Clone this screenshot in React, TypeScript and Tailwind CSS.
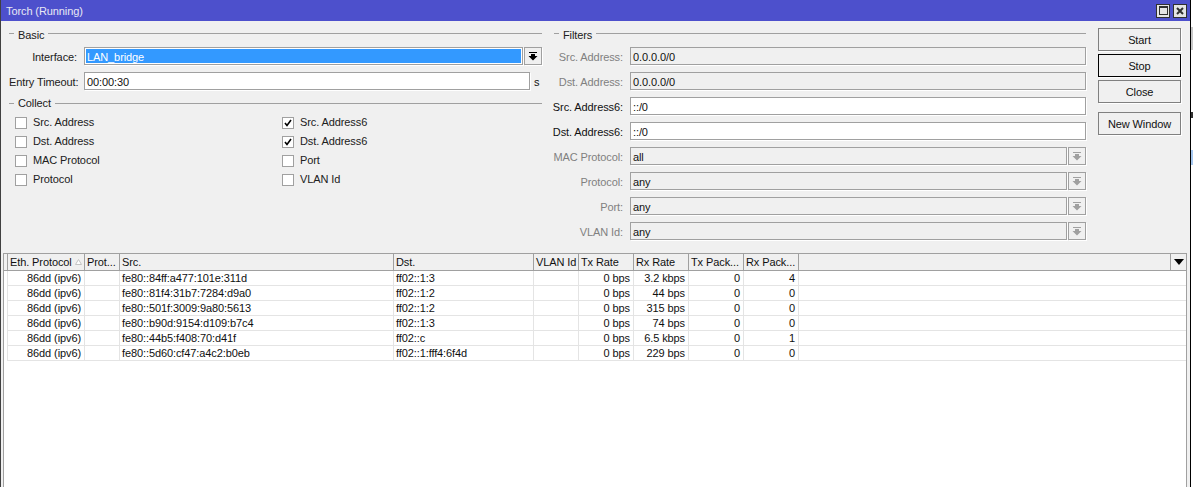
const font = "[font-family:'Liberation_Sans',Arial,sans-serif]"

function SectionTitle({ title, centered }: { title: string; centered?: boolean }) {
  return (
    <div className="flex h-[13px] items-center">
      <div className="h-px w-[5px] bg-[#a0a0a0]" />
      <span className={`px-[4px] leading-[13px] text-[#202020] ${centered ? '' : 'pt-[4px]'}`}>{title}</span>
      <div className="h-px flex-1 bg-[#a0a0a0]" />
    </div>
  )
}

function DropButton({ disabled }: { disabled?: boolean }) {
  const color = disabled ? '#a0a0a0' : '#000000'
  return (
    <div className="ml-px flex h-[18px] w-[18px] shrink-0 items-center justify-center border border-[#a0a0a0] shadow-[1px_1px_0_#ffffff]">
      <svg width="10" height="9" viewBox="0 0 10 9" fill={color}>
        <rect x="1" y="0" width="8" height="1" />
        <path d="M3 2h4v2h2.5L5 8.5.5 4H3z" />
      </svg>
    </div>
  )
}

function Field({
  label,
  value,
  disabled,
  dropdown,
  activeLabel,
}: {
  label: string
  value: string
  disabled?: boolean
  dropdown?: boolean
  activeLabel?: boolean
}) {
  return (
    <div className="flex h-[18px] items-center">
      <label className={`flex w-[69px] justify-end whitespace-nowrap pt-[2px] ${activeLabel ? 'text-[#101010]' : 'text-[#808080]'}`}>
        {label}:
      </label>
      <div
        className={`ml-[7px] flex h-[18px] flex-1 items-center border border-[#a0a0a0] px-[2px] pt-[2px] shadow-[1px_1px_0_#ffffff] ${
          disabled ? 'bg-[#f0f0f0]' : 'bg-white'
        }`}
      >
        {value}
      </div>
      {dropdown && <DropButton disabled />}
    </div>
  )
}

function Check({ label, checked }: { label: string; checked?: boolean }) {
  return (
    <div className="flex h-[13px] items-center gap-[6px]">
      <div className="flex h-[12px] w-[12px] items-center justify-center border border-[#a0a0a0] bg-white">
        {checked && (
          <svg width="8" height="8" viewBox="0 0 8 8" fill="none" stroke="#000" strokeWidth="1.6">
            <path d="M1 4l2 2.5L7 1" />
          </svg>
        )}
      </div>
      <span className="text-[#202020]">{label}</span>
    </div>
  )
}

function SideButton({ label, focused, className = '' }: { label: string; focused?: boolean; className?: string }) {
  return (
    <button
      className={`h-[23px] w-[83px] border pt-px text-center text-[#101010] shadow-[1px_1px_0_#ffffff] ${
        focused ? 'border-black' : 'border-[#808080]'
      } ${className}`}
    >
      {label}
    </button>
  )
}

const columns = [
  { title: 'Eth. Protocol', width: 'w-[77px]', sorted: true },
  { title: 'Prot...', width: 'w-[35px]' },
  { title: 'Src.', width: 'w-[274px]' },
  { title: 'Dst.', width: 'w-[140px]' },
  { title: 'VLAN Id', width: 'w-[45px]' },
  { title: 'Tx Rate', width: 'w-[55px]' },
  { title: 'Rx Rate', width: 'w-[55px]' },
  { title: 'Tx Pack...', width: 'w-[55px]' },
  { title: 'Rx Pack...', width: 'w-[55px]' },
]

const rows = [
  ['fe80::84ff:a477:101e:311d', 'ff02::1:3', '3.2 kbps', '4'],
  ['fe80::81f4:31b7:7284:d9a0', 'ff02::1:2', '44 bps', '0'],
  ['fe80::501f:3009:9a80:5613', 'ff02::1:2', '315 bps', '0'],
  ['fe80::b90d:9154:d109:b7c4', 'ff02::1:3', '74 bps', '0'],
  ['fe80::44b5:f408:70:d41f', 'ff02::c', '6.5 kbps', '1'],
  ['fe80::5d60:cf47:a4c2:b0eb', 'ff02::1:fff4:6f4d', '229 bps', '0'],
]

function Cell({ width, right, children }: { width: string; right?: boolean; children?: React.ReactNode }) {
  return (
    <div
      className={`${width} flex h-[15px] shrink-0 items-center overflow-hidden whitespace-nowrap border-r border-b border-[#e4e4e4] px-[2px] ${
        right ? 'justify-end pr-[3px]' : ''
      }`}
    >
      {children}
    </div>
  )
}

export default function App() {
  return (
    <div className={`${font} flex h-[487px] w-[1193px] overflow-hidden bg-white text-[11px] tracking-[-0.1px] text-[#101010]`}>
      <div className="flex h-full w-[1191px] shrink-0 flex-col border-l border-r border-l-[#404040] border-r-black bg-[#f0f0f0]">
        <div className="flex h-[21px] shrink-0 items-center justify-between bg-[#4d50cc] pl-[5px] pr-[3px] text-[#e8e8f4]">
          <span className="pt-[2px]">Torch (Running)</span>
          <div className="flex gap-[3px]">
            <div className="flex h-[14px] w-[14px] items-center justify-center border border-[#303030] bg-[#e4e4e4]">
              <div className="h-[9px] w-[9px] border border-t-2 border-[#303030]" />
            </div>
            <div className="flex h-[14px] w-[14px] items-center justify-center border border-[#303030] bg-[#e4e4e4]">
              <svg width="8" height="8" viewBox="0 0 8 8" stroke="#303030" strokeWidth="2">
                <path d="M1 1l6 6M7 1l-6 6" />
              </svg>
            </div>
          </div>
        </div>

        <div className="flex h-[232px] shrink-0">
          <div className="flex w-[541px] shrink-0 flex-col pl-[8px] pt-[6px]">
            <SectionTitle title="Basic" />
            <div className="mt-[7px] flex h-[18px] items-center">
              <label className="w-[68px] pt-[2px] text-right text-[#202020]">Interface:</label>
              <div className="ml-[7px] flex h-[18px] w-[439px] items-center border border-[#a0a0a0] bg-white p-px shadow-[1px_1px_0_#ffffff]">
                <div className="flex h-full w-full items-center bg-[#3399ff] px-px pt-[2px] text-white">LAN_bridge</div>
              </div>
              <DropButton />
            </div>
            <div className="mt-[7px] flex h-[18px] items-center">
              <label className="w-[68px] whitespace-nowrap pt-[2px] text-right text-[#202020]">Entry Timeout:</label>
              <div className="ml-[7px] flex h-[18px] w-[446px] items-center border border-[#a0a0a0] bg-white px-[2px] pt-[2px] shadow-[1px_1px_0_#ffffff]">
                00:00:30
              </div>
              <span className="ml-[4px] pt-[2px]">s</span>
            </div>
            <div className="mt-[7px]">
              <SectionTitle title="Collect" centered />
            </div>
            <div className="mt-[6px] grid grid-cols-[267px_1fr] gap-y-[6px] pl-[6px]">
              <Check label="Src. Address" />
              <Check label="Src. Address6" checked />
              <Check label="Dst. Address" />
              <Check label="Dst. Address6" checked />
              <Check label="MAC Protocol" />
              <Check label="Port" />
              <Check label="Protocol" />
              <Check label="VLAN Id" />
            </div>
          </div>

          <div className="ml-[12px] flex w-[532px] shrink-0 flex-col pt-[6px]">
            <SectionTitle title="Filters" />
            <div className="mt-[7px] flex flex-col gap-[7px]">
              <Field label="Src. Address" value="0.0.0.0/0" disabled />
              <Field label="Dst. Address" value="0.0.0.0/0" disabled />
              <Field label="Src. Address6" value="::/0" activeLabel />
              <Field label="Dst. Address6" value="::/0" activeLabel />
              <Field label="MAC Protocol" value="all" disabled dropdown />
              <Field label="Protocol" value="any" disabled dropdown />
              <Field label="Port" value="any" disabled dropdown />
              <Field label="VLAN Id" value="any" disabled dropdown />
            </div>
          </div>

          <div className="ml-[12px] flex flex-col gap-[3px] pt-[7px]">
            <SideButton label="Start" />
            <SideButton label="Stop" focused />
            <SideButton label="Close" />
            <SideButton label="New Window" className="mt-[6px]" />
          </div>
        </div>

        <div className="ml-[2px] flex min-h-0 w-[1184px] flex-1 flex-col border border-b-0 border-[#a0a0a0] bg-white">
          <div className="flex h-[17px] shrink-0 border-b border-[#a0a0a0] bg-[#f0f0f0]">
            <div className="h-full w-[4px] shrink-0 border-r border-[#a0a0a0]" />
            {columns.map((c) => (
              <div
                key={c.title}
                className={`${c.width} flex shrink-0 items-center justify-between whitespace-nowrap border-r border-[#a0a0a0] px-[2px]`}
              >
                {c.title}
                {c.sorted && (
                  <svg width="7" height="6" viewBox="0 0 7 6" fill="#ffffff" stroke="#c4c4c4">
                    <path d="M3.5.5L6.5 5.5H.5z" />
                  </svg>
                )}
              </div>
            ))}
            <div className="flex-1" />
            <div className="flex w-[16px] items-center justify-center border-l border-[#a0a0a0]">
              <svg width="10" height="6" viewBox="0 0 10 6" fill="#000">
                <path d="M0 0h10L5 6z" />
              </svg>
            </div>
          </div>
          {rows.map((r) => (
            <div key={r[0]} className="flex h-[15px] shrink-0">
              <div className="w-[4px] shrink-0 border-r border-[#e4e4e4]" />
              <Cell width="w-[77px]" right>86dd (ipv6)</Cell>
              <Cell width="w-[35px]" />
              <Cell width="w-[274px]">{r[0]}</Cell>
              <Cell width="w-[140px]">{r[1]}</Cell>
              <Cell width="w-[45px]" />
              <Cell width="w-[55px]" right>0 bps</Cell>
              <Cell width="w-[55px]" right>{r[2]}</Cell>
              <Cell width="w-[55px]" right>0</Cell>
              <Cell width="w-[55px]" right>{r[3]}</Cell>
              <div className="flex-1 border-b border-[#e4e4e4]" />
            </div>
          ))}
        </div>
      </div>

      <div className="flex w-[2px] flex-col pt-[27px]">
        <div className="h-[23px] bg-[#c8c8c8]" />
        <div className="mt-[62px] h-[6px] bg-[#303030]" />
        <div className="mt-[32px] h-[15px] bg-[#a6c8f0]" />
      </div>
    </div>
  )
}
